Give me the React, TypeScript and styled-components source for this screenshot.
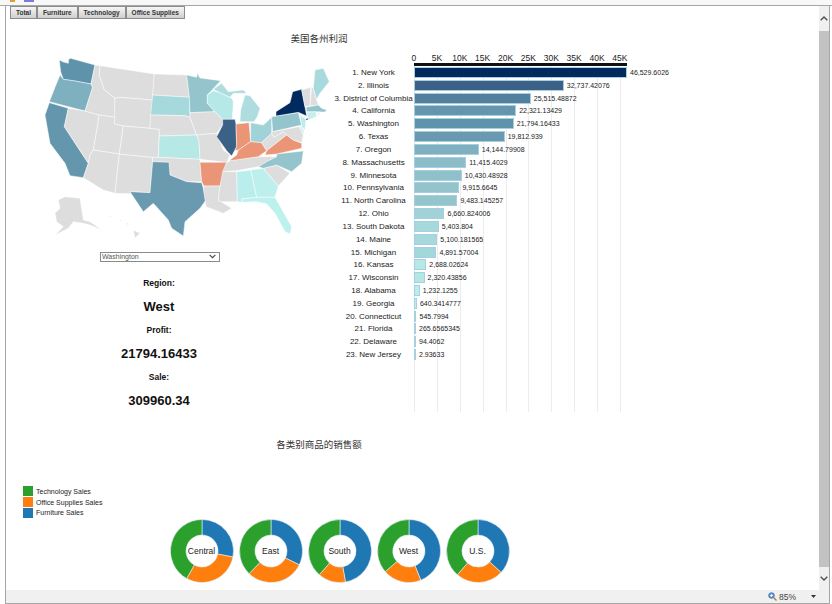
import React from "react";
import styled, { createGlobalStyle } from "styled-components";

const Global = createGlobalStyle`
  html, body { margin: 0; padding: 0; background: #fff; overflow: hidden; }
  body { font-family: "Liberation Sans", Arial, sans-serif; color: #222; }
`;

const FONT_CJK = `"Liberation Sans", "Noto Sans CJK SC", sans-serif`;

const Window = styled.div`
  width: 832px;
  height: 604px;
  display: flex;
  flex-direction: column;
  overflow: hidden;
`;
const TopStrip = styled.div`
  height: 5px;
  background: #f8f8f8;
  border-bottom: 1px solid #a6a6a6;
  display: flex;
  align-items: flex-start;
  gap: 9px;
  padding-left: 10px;
`;
const StripIcon = styled.span<{ $c: string; $w: number }>`
  display: block;
  height: 2px;
  width: ${(p) => p.$w}px;
  background: ${(p) => p.$c};
`;
const Workspace = styled.div`
  flex: 1;
  min-height: 0;
  margin: 0 2px 0 5px;
  border-left: 1px solid #a6a6a6;
  border-right: 1px solid #a6a6a6;
  border-bottom: 1px solid #a6a6a6;
  display: flex;
  flex-direction: column;
`;
const Viewport = styled.div`
  flex: 1;
  min-height: 0;
  display: flex;
`;
const Content = styled.main`
  flex: 1;
  min-width: 0;
  overflow: hidden;
`;
const ScrollBar = styled.div`
  width: 10px;
  background: #f0f0f0;
  display: flex;
  flex-direction: column;
  align-items: center;
`;
const ScrollBtn = styled.div`
  height: 25px;
  width: 100%;
  display: flex;
  align-items: center;
  justify-content: center;
  svg { display: block; }
`;
const ScrollThumb = styled.div`
  width: 100%;
  height: 536px;
  background: #c2c2c2;
`;
const ScrollBtnDown = styled(ScrollBtn)`
  height: 22px;
`;
const StatusBar = styled.footer`
  height: 13px;
  background: #f0f0f0;
  display: flex;
  align-items: center;
  justify-content: flex-end;
  font-size: 8.5px;
  color: #444;
  padding-right: 13px;
`;
const Zoom = styled.span`
  display: flex;
  align-items: center;
  gap: 2px;
  margin-right: 15px;
`;

const Tabs = styled.nav`
  display: flex;
  height: 13px;
  padding-left: 4px;
`;
const Tab = styled.button`
  margin: 0;
  padding: 0 5px;
  height: 13px;
  border: 1px solid #8c8c8c;
  background: linear-gradient(#f6f6f6, #cfcfcf);
  font: bold 6.5px "Liberation Sans", Arial, sans-serif;
  color: #333;
  white-space: nowrap;
`;
const Title = styled.h2`
  margin: 0;
  width: 626px;
  text-align: center;
  font: normal 9.5px/12px ${FONT_CJK};
  color: #333;
`;
const MapTitle = styled(Title)`
  margin-top: 14px;
`;
const Dash = styled.section`
  display: flex;
  margin-top: 5px;
  height: 362px;
`;
const LeftCol = styled.div`
  width: 327px;
  flex: none;
  display: flex;
  flex-direction: column;
`;
const MapSvg = styled.svg`
  display: block;
  width: 327px;
  height: 200px;
  flex: none;
`;
const CHEVRON = `url("data:image/svg+xml,%3Csvg xmlns='http://www.w3.org/2000/svg' width='7' height='5' viewBox='0 0 7 5'%3E%3Cpath d='M.6.8 3.5 3.7 6.4.8' fill='none' stroke='%23444' stroke-width='1.1'/%3E%3C/svg%3E")`;
const Picker = styled.select`
  display: block;
  appearance: none;
  box-sizing: border-box;
  margin: 2px 0 0 94px;
  width: 120px;
  height: 9.5px;
  padding: 0 0 0 1px;
  font: 7px/8px "Liberation Sans", Arial, sans-serif;
  color: #555;
  background: #fff ${CHEVRON} no-repeat right 3px center;
  border: 1px solid #8a8a8a;
  border-radius: 0;
`;
const Stats = styled.div`
  margin-top: 16.5px;
  width: 306px;
  display: flex;
  flex-direction: column;
  align-items: center;
  color: #111;
  font-weight: bold;
`;
const StatLabel = styled.div`
  font-size: 8.5px;
  line-height: 10px;
  height: 21px;
`;
const StatValue = styled.div`
  font-size: 13px;
  line-height: 15px;
  height: 26px;
`;

const ChartCol = styled.div`
  flex: 1;
  min-width: 0;
`;
const UNIT = 213 / 46529.6026;
const TICK = 5000 * UNIT;
const LABEL_W = 81;
const AxisTicks = styled.div`
  display: flex;
  height: 13px;
  margin-left: ${LABEL_W - TICK / 2}px;
  align-items: flex-end;
`;
const Tick = styled.span`
  flex: none;
  width: ${TICK}px;
  text-align: center;
  font-size: 8.5px;
  line-height: 10px;
  color: #222;
`;
const AxisLine = styled.div`
  margin-left: ${LABEL_W}px;
  width: 213px;
  height: 3px;
  background: #111;
`;
const Plot = styled.div`
  height: 346px;
  background-image: repeating-linear-gradient(
    to right,
    #ececec 0,
    #ececec 1px,
    transparent 1px,
    transparent ${TICK}px
  );
  background-size: ${TICK * 9 + 1}px 100%;
  background-position: ${LABEL_W}px 0;
  background-repeat: no-repeat;
`;
const Row = styled.div`
  display: flex;
  align-items: center;
  height: 12.83px;
`;
const RowName = styled.div`
  flex: none;
  width: ${LABEL_W}px;
  text-align: center;
  font-size: 8px;
  color: #222;
  white-space: nowrap;
`;
const Bar = styled.div`
  flex: none;
  box-sizing: border-box;
  height: 11px;
  border: 1px solid #a6cfe2;
  border-left-width: 0.5px;
`;
const RowValue = styled.div`
  margin-left: 3px;
  font-size: 7px;
  color: #222;
  white-space: nowrap;
`;

const SalesTitle = styled(Title)`
  margin-top: 27px;
`;
const SalesArea = styled.section`
  display: flex;
  align-items: flex-start;
  margin-top: 35px;
`;
const Legend = styled.ul`
  list-style: none;
  margin: 0 0 0 17px;
  padding: 0;
  width: 146.5px;
  flex: none;
`;
const LegendItem = styled.li`
  display: flex;
  align-items: center;
  gap: 3px;
  height: 10.7px;
  font-size: 7px;
  color: #222;
`;
const Swatch = styled.span<{ $c: string }>`
  width: 10px;
  height: 10px;
  background: ${(p) => p.$c};
`;
const Donuts = styled.div`
  display: flex;
  gap: 5px;
  margin-top: 33px;
`;
const DonutBox = styled.div`
  width: 64px;
  height: 64px;
  display: grid;
  place-items: center;
  & > * { grid-area: 1 / 1; }
`;
const DonutLabel = styled.span`
  font-size: 8.5px;
  color: #222;
`;

const GREY = "#dddddd";
const ORANGE = "#eb9577";
const P: [string, string][] = [
  ["#5f93ab", "178,180 190,186 205,190 206,178 212,175 285,195 273,252 225,243 190,238 182,215"],
  ["#7fb0bf", "180,225 190,238 225,243 273,252 278,262 255,333 148,305 165,262"],
  ["#6497ae", "148,308 205,325 193,380 265,490 250,533 210,527 195,490 150,430 135,345"],
  [GREY, "205,325 255,333 298,345 280,450 270,465 265,490 193,380"],
  [GREY, "285,195 300,197 298,225 312,268 345,295 345,352 298,345 255,333 278,262 273,252"],
  [GREY, "300,197 463,222 458,300 358,292 345,295 312,268 298,225"],
  [GREY, "345,295 358,292 458,300 450,385 370,378 343,372"],
  [GREY, "298,345 345,352 343,372 370,378 358,462 280,450"],
  [GREY, "280,450 358,462 345,580 310,570 250,533 265,490 270,465"],
  [GREY, "358,462 458,472 458,485 450,578 390,575 392,581 345,580"],
  [GREY, "370,378 450,385 478,388 475,472 458,472 358,462"],
  [GREY, "463,222 560,225 568,292 458,285"],
  ["#a6d9dc", "458,285 568,292 570,352 555,347 452,345"],
  [GREY, "452,345 555,347 570,352 590,405 478,408 478,388 450,385"],
  ["#b6e8e6", "478,408 590,405 597,425 600,478 475,472"],
  [GREY, "458,472 475,472 600,478 605,545 560,545 510,525 507,487 458,485"],
  ["#6a9ab0", "458,485 507,487 510,525 560,545 605,548 610,565 618,600 600,625 555,665 550,708 515,685 505,660 460,610 430,635 390,575 450,578"],
  ["#94c4cc", "560,225 590,232 592,220 600,234 662,242 622,285 622,310 645,335 570,338 568,292"],
  [GREY, "570,338 645,335 668,358 668,375 650,400 590,405 570,352"],
  [GREY, "590,405 650,400 670,450 690,465 680,487 600,478 597,425"],
  ["#ea9577", "600,487 680,487 660,558 612,558 605,545"],
  [GREY, "612,558 660,558 655,600 695,625 670,640 618,620 610,565"],
  [GREY, "668,515 710,515 712,605 660,605 655,595 660,558"],
  ["#b6e8e7", "622,285 640,272 660,278 695,295 700,305 697,358 668,358 645,335 622,310"],
  ["#aedcdf", "720,365 722,330 735,285 750,287 780,325 772,350 762,365"],
  ["#aedcdf", "640,268 665,250 685,275 730,270 740,280 700,280 690,292 660,278"],
  ["#3b6286", "668,358 705,358 708,372 710,440 695,468 680,452 650,410 668,375"],
  [ORANGE, "708,372 747,368 752,425 715,450 705,452 710,440"],
  ["#a0d2d8", "752,368 790,375 815,352 815,400 785,428 752,425"],
  [GREY, "680,487 692,482 775,470 800,470 830,470 775,500 710,512 668,515"],
  [ORANGE, "690,480 710,465 715,450 752,425 785,428 800,452 775,470 692,482"],
  ["#baeeec", "710,515 752,510 770,592 725,597 728,607 712,605"],
  ["#bdf0ed", "752,510 790,505 835,558 825,592 770,592"],
  ["#bcf1ee", "725,597 770,592 825,592 875,680 870,702 855,695 825,640 800,612 770,605 728,607"],
  [GREY, "790,505 830,495 870,520 835,558"],
  ["#94c4cc", "775,500 800,485 830,470 830,462 910,453 905,490 875,515 830,495 790,505"],
  [GREY, "785,428 815,400 822,412 850,395 860,405 800,452"],
  [ORANGE, "795,465 800,452 860,405 880,420 905,430 905,445 830,462"],
  ["#94c4cc", "815,350 895,338 905,375 818,395"],
  [GREY, "818,395 897,380 910,405 905,428 880,420 860,405 850,395 822,412 815,400"],
  ["#bcecee", "900,345 918,358 915,390 905,380"],
  ["#d6ecf6", "897,380 905,380 912,392 910,405"],
  ["#012a5e", "828,335 870,308 878,275 905,268 920,348 895,337 828,348"],
  ["#012a5e", "917,358 945,343 947,346 920,361"],
  [GREY, "905,270 932,262 930,318 915,320"],
  [GREY, "935,260 940,265 950,300 955,315 930,318"],
  ["#a8dadd", "945,210 970,205 988,245 960,280 950,298 940,265"],
  ["#94c4cc", "918,322 955,315 965,325 980,330 975,336 920,335"],
  ["#c7eeee", "920,337 948,335 950,350 925,360"],
  ["#eef6f6", "950,336 960,336 960,345 951,350"],
  [GREY, "175,600 195,590 240,595 250,660 270,665 305,690 270,675 250,670 220,665 205,685 165,705 190,680 170,665 165,640 180,625"],
  [GREY, "400,690 420,700 405,714"],
  [GREY, "358,658 364,660 362,664"],
  [GREY, "378,668 386,672 382,675"],
  [GREY, "328,648 334,648 332,652"],
];

const DATA: [string, string, number, string][] = [
  ["1. New York", "46,529.6026", 46529.6, "#012a5e"],
  ["2. Illinois", "32,737.42076", 32737.4, "#3b6286"],
  ["3. District of Columbia", "25,515.48872", 25515.5, "#527f9b"],
  ["4. California", "22,321.13429", 22321.1, "#6497ae"],
  ["5. Washington", "21,794.16433", 21794.2, "#5f93ab"],
  ["6. Texas", "19,812.939", 19812.9, "#6a9ab0"],
  ["7. Oregon", "14,144.79908", 14144.8, "#7fb0bf"],
  ["8. Massachusetts", "11,415.4029", 11415.4, "#8cbcc7"],
  ["9. Minnesota", "10,430.48928", 10430.5, "#90c1ca"],
  ["10. Pennsylvania", "9,915.6645", 9915.7, "#93c3cb"],
  ["11. North Carolina", "9,483.145257", 9483.1, "#94c4cc"],
  ["12. Ohio", "6,660.824006", 6660.8, "#a0d2d8"],
  ["13. South Dakota", "5,403.804", 5403.8, "#a6d9dc"],
  ["14. Maine", "5,100.181565", 5100.2, "#a6d8dc"],
  ["15. Michigan", "4,891.57004", 4891.6, "#a3d8da"],
  ["16. Kansas", "2,688.02624", 2688, "#b6e8e6"],
  ["17. Wisconsin", "2,320.43856", 2320.4, "#b4e6e5"],
  ["18. Alabama", "1,232.1255", 1232.1, "#baeeec"],
  ["19. Georgia", "640.3414777", 640.3, "#bdf0ed"],
  ["20. Connecticut", "545.7994", 545.8, "#c7eeee"],
  ["21. Florida", "265.6565345", 265.7, "#7fbbdd"],
  ["22. Delaware", "94.4062", 94.4, "#4a8cc0"],
  ["23. New Jersey", "2.93633", 2.9, "#bcd8ee"],
];

const BLUE = "#1f77b4";
const AMBER = "#ff7f0e";
const GREEN = "#2ca02c";

function arc(a0: number, a1: number, R = 31.5, r = 16) {
  const pt = (rad: number, a: number) => {
    const t = ((a - 90) * Math.PI) / 180;
    return `${(32 + rad * Math.cos(t)).toFixed(2)} ${(32 + rad * Math.sin(t)).toFixed(2)}`;
  };
  const large = a1 - a0 > 180 ? 1 : 0;
  return `M${pt(R, a0)}A${R} ${R} 0 ${large} 1 ${pt(R, a1)}L${pt(r, a1)}A${r} ${r} 0 ${large} 0 ${pt(r, a0)}Z`;
}

const DONUTS: [string, number, number][] = [
  ["Central", 101, 209],
  ["East", 116, 224],
  ["South", 170, 221],
  ["West", 158, 229],
  ["U.S.", 133, 221],
];

const ticks = ["0", "5K", "10K", "15K", "20K", "25K", "30K", "35K", "40K", "45K"];
const tabs = ["Total", "Furniture", "Technology", "Office Supplies"];

export default function App() {
  return (
    <Window>
      <Global />
      <TopStrip>
        <StripIcon $c="#e0a030" $w={5} />
        <StripIcon $c="#7a7ae0" $w={10} />
      </TopStrip>
      <Workspace>
        <Viewport>
          <Content>
            <Tabs>
              {tabs.map((t) => (
                <Tab key={t}>{t}</Tab>
              ))}
            </Tabs>
            <MapTitle>美国各州利润</MapTitle>
            <Dash>
              <LeftCol>
                <MapSvg viewBox="18 150 981 600">
                  {P.map(([fill, pts], i) => (
                    <polygon key={i} points={pts} fill={fill} stroke="#fff" strokeWidth={1.4} strokeLinejoin="round" />
                  ))}
                </MapSvg>
                <Picker defaultValue="Washington">
                  <option>Washington</option>
                </Picker>
                <Stats>
                  <StatLabel>Region:</StatLabel>
                  <StatValue>West</StatValue>
                  <StatLabel>Profit:</StatLabel>
                  <StatValue>21794.16433</StatValue>
                  <StatLabel>Sale:</StatLabel>
                  <StatValue>309960.34</StatValue>
                </Stats>
              </LeftCol>
              <ChartCol>
                <AxisTicks>
                  {ticks.map((t) => (
                    <Tick key={t}>{t}</Tick>
                  ))}
                </AxisTicks>
                <AxisLine />
                <Plot>
                  {DATA.map(([name, label, v, c]) => (
                    <Row key={name}>
                      <RowName>{name}</RowName>
                      <Bar style={{ width: Math.max(v * UNIT, 1), background: c }} />
                      <RowValue>{label}</RowValue>
                    </Row>
                  ))}
                </Plot>
              </ChartCol>
            </Dash>
            <SalesTitle>各类别商品的销售额</SalesTitle>
            <SalesArea>
              <Legend>
                <LegendItem><Swatch $c={GREEN} />Technology Sales</LegendItem>
                <LegendItem><Swatch $c={AMBER} />Office Supplies Sales</LegendItem>
                <LegendItem><Swatch $c={BLUE} />Furniture Sales</LegendItem>
              </Legend>
              <Donuts>
                {DONUTS.map(([name, a, b]) => (
                  <DonutBox key={name}>
                    <svg width="64" height="64" viewBox="0 0 64 64">
                      <path d={arc(0, a)} fill={BLUE} stroke="#e8f2f8" strokeWidth={0.6} />
                      <path d={arc(a, b)} fill={AMBER} stroke="#e8f2f8" strokeWidth={0.6} />
                      <path d={arc(b, 360)} fill={GREEN} stroke="#e8f2f8" strokeWidth={0.6} />
                    </svg>
                    <DonutLabel>{name}</DonutLabel>
                  </DonutBox>
                ))}
              </Donuts>
            </SalesArea>
          </Content>
          <ScrollBar>
            <ScrollBtn>
              <svg width="8" height="5" viewBox="0 0 8 5"><path d="M.7 4.3 4 1l3.3 3.3" fill="none" stroke="#505050" strokeWidth="1.4" /></svg>
            </ScrollBtn>
            <ScrollThumb />
            <ScrollBtnDown>
              <svg width="8" height="5" viewBox="0 0 8 5"><path d="M.7.7 4 4 7.3.7" fill="none" stroke="#505050" strokeWidth="1.4" /></svg>
            </ScrollBtnDown>
          </ScrollBar>
        </Viewport>
        <StatusBar>
          <Zoom>
            <svg width="9" height="9" viewBox="0 0 9 9">
              <circle cx="3.5" cy="3.5" r="2.8" fill="#5b9bd5" stroke="#3a6ea5" strokeWidth=".8" />
              <path d="M3.5 2v3M2 3.5h3" stroke="#fff" strokeWidth=".8" />
              <path d="M5.6 5.6 8.5 8.5" stroke="#b08040" strokeWidth="1.4" />
            </svg>
            85%
          </Zoom>
          <svg width="5" height="3" viewBox="0 0 5 3"><path d="M0 0h5L2.5 3z" fill="#333" /></svg>
        </StatusBar>
      </Workspace>
    </Window>
  );
}
